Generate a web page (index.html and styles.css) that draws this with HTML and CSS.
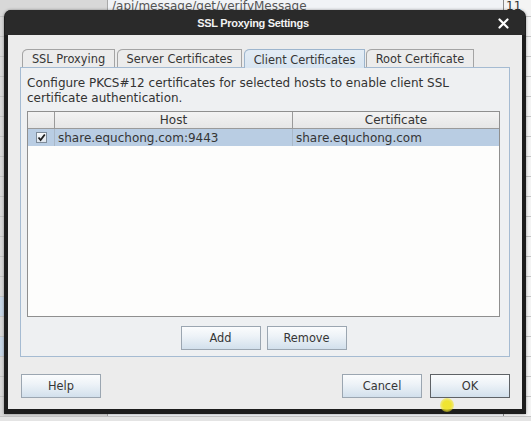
FILE: index.html
```html
<!DOCTYPE html>
<html>
<head>
<meta charset="utf-8">
<link rel="stylesheet" href="styles.css">
</head>
<body>
<div class="app">
  <div class="arow"><div class="c1"></div><div class="c2">/api/message/get/verifyMessage</div><div class="c3">11</div></div>
  <div class="arow"><div class="c1"></div><div class="c2"></div><div class="c3">11</div></div>
  <div class="arow"><div class="c1"></div><div class="c2"></div><div class="c3">11</div></div>
  <div class="arow"><div class="c1"></div><div class="c2"></div><div class="c3">11</div></div>
  <div class="arow"><div class="c1"></div><div class="c2"></div><div class="c3">11</div></div>
  <div class="arow"><div class="c1"></div><div class="c2"></div><div class="c3">11</div></div>
  <div class="arow"><div class="c1"></div><div class="c2"></div><div class="c3">11</div></div>
  <div class="arow"><div class="c1"></div><div class="c2"></div><div class="c3">11</div></div>
  <div class="arow"><div class="c1"></div><div class="c2"></div><div class="c3">11</div></div>
  <div class="arow"><div class="c1"></div><div class="c2"></div><div class="c3">11</div></div>
  <div class="arow"><div class="c1"></div><div class="c2"></div><div class="c3">11</div></div>
  <div class="arow"><div class="c1"></div><div class="c2"></div><div class="c3">11</div></div>
  <div class="arow"><div class="c1"></div><div class="c2"></div><div class="c3">11</div></div>
  <div class="arow"><div class="c1"></div><div class="c2"></div><div class="c3">11</div></div>
  <div class="arow"><div class="c1"></div><div class="c2"></div><div class="c3">11</div></div>
  <div class="arow asel"><div class="c1"></div><div class="c2"></div><div class="c3">11</div></div>
  <div class="arow"><div class="c1"></div><div class="c2"></div><div class="c3">11</div></div>
  <div class="arow asel"><div class="c1">/</div><div class="c2"></div><div class="c3">11</div></div>
  <div class="arow"><div class="c1"></div><div class="c2"></div><div class="c3">11</div></div>
  <div class="arow"><div class="c1">Z</div><div class="c2"></div><div class="c3">11</div></div>
  <div class="arow"><div class="c1"></div><div class="c2"></div><div class="c3"></div></div>
</div>

<div class="dialog">
  <div class="titlebar">
    <span class="title">SSL Proxying Settings</span>
    <svg class="close" width="11" height="11" viewBox="0 0 11 11"><path d="M1.5 1.5 L9.5 9.5 M9.5 1.5 L1.5 9.5" stroke="#ffffff" stroke-width="2.2" stroke-linecap="round"/></svg>
  </div>
  <div class="body">
    <div class="tabs">
      <div class="tab t1">SSL Proxying</div>
      <div class="tab t2">Server Certificates</div>
      <div class="tab t3 selected">Client Certificates</div>
      <div class="tab t4">Root Certificate</div>
    </div>
    <div class="panel">
      <p class="desc">Configure PKCS#12 certificates for selected hosts to enable client SSL<br>certificate authentication.</p>
      <div class="table">
        <div class="thead">
          <div class="cell chk"></div>
          <div class="cell host center">Host</div>
          <div class="cell cert center">Certificate</div>
        </div>
        <div class="trow sel">
          <div class="cell chk"><span class="checkbox"><svg width="9" height="9" viewBox="0 0 9 9"><path d="M1.5 4.5 L3.6 7 L7.8 1.5" fill="none" stroke="#1e1e1e" stroke-width="1.8"/></svg></span></div>
          <div class="cell host">share.equchong.com:9443</div>
          <div class="cell cert">share.equchong.com</div>
        </div>
      </div>
      <div class="panel-buttons">
        <button class="btn">Add</button>
        <button class="btn">Remove</button>
      </div>
    </div>
    <div class="footer">
      <button class="btn">Help</button>
      <div class="spacer"></div>
      <button class="btn">Cancel</button>
      <button class="btn default">OK</button>
    </div>
  </div>
</div>
<div class="cursor"></div>
</body>
</html>
```
FILE: styles.css
```css
html, body {
  margin: 0;
  padding: 0;
}
body {
  width: 531px;
  height: 421px;
  overflow: hidden;
  position: relative;
  background: #e4e4e4;
  font-family: "DejaVu Sans", sans-serif;
}

/* background application */
.app {
  display: flex;
  flex-direction: column;
  margin-top: -3px;
}
.arow {
  display: flex;
  height: 20px;
  box-sizing: border-box;
  border-bottom: 1px solid #c4c4c4;
  font-size: 12px;
  color: #555;
  line-height: 19px;
}
.c1 {
  width: 107px;
  background: #d8d8d8;
  border-right: 1px solid #a8a8a8;
  text-align: right;
}
.c2 {
  flex: 1;
  background: #f1f3f6;
  padding-left: 4px;
}
.c3 {
  width: 25px;
  background: #f4f4f4;
  border-left: 1px solid #8a8a8a;
  padding-left: 2px;
  color: #333;
}
.asel .c1, .asel .c2 {
  background: #c7d6e6;
}

/* dialog window */
.dialog {
  position: absolute;
  left: 4px;
  top: 10px;
  width: 522px;
  height: 404px;
  box-sizing: border-box;
  background: #1d1d1d;
  border-radius: 7px 7px 0 0;
  padding: 0 4px 5px 4px;
  display: flex;
  flex-direction: column;
  box-shadow: 0 0 3px rgba(0,0,0,0.4);
}
.titlebar {
  height: 25px;
  flex: none;
  display: flex;
  align-items: center;
  justify-content: center;
  position: relative;
  background: #2a2a2a;
  border-radius: 6px 6px 0 0;
  margin: 0 -3px;
}
.title {
  color: #f2f2f2;
  font-family: "Liberation Sans", sans-serif;
  font-weight: bold;
  font-size: 11px;
  letter-spacing: -0.3px;
  margin-right: 24px;
}
.close {
  position: absolute;
  right: 16px;
  top: 8px;
}
.body {
  flex: 1;
  background: #ececec;
  padding: 14px 12px 11px 12px;
  display: flex;
  flex-direction: column;
  color: #333;
  font-size: 11.4px;
}

/* tabs */
.tabs {
  height: 18px;
  display: flex;
  align-items: flex-end;
  padding-left: 2px;
  flex: none;
}
.tab {
  height: 18px;
  box-sizing: border-box;
  border: 1px solid #a4a4a4;
  border-bottom: none;
  border-top-left-radius: 6px 5px;
  background: #ececec;
  display: flex;
  align-items: center;
  justify-content: center;
  color: #363636;
  margin-right: 2px;
  padding-top: 1px;
}
.t1 { width: 93px; }
.t2 { width: 125px; }
.t3 { width: 121px; }
.t4 { width: 108px; }
.tab.selected {
  height: 19px;
  margin-bottom: -1px;
  background: linear-gradient(#e3ecf5, #d8e5f1);
  border-color: #9db5cd;
  position: relative;
  z-index: 1;
  margin-right: 1px;
}

.panel {
  height: 290px;
  flex: none;
  box-sizing: border-box;
  border: 1px solid #a5bbd2;
  background: #eef0f2;
  padding: 8px 9px 0 6px;
  display: flex;
  flex-direction: column;
}
.desc {
  margin: 0;
  line-height: 15px;
  font-size: 12px;
  color: #333;
}
.table {
  margin-top: 5px;
  height: 206px;
  box-sizing: border-box;
  border: 1px solid #8f8f8f;
  background: #fdfdfc;
  display: flex;
  flex-direction: column;
  font-size: 12px;
}
.thead {
  height: 17px;
  box-sizing: border-box;
  display: flex;
  background: linear-gradient(#f3f3f3, #e6e6e6);
  border-bottom: 1px solid #9a9a9a;
}
.trow {
  height: 17px;
  box-sizing: border-box;
  display: flex;
}
.trow.sel {
  background: #b9cde3;
}
.cell {
  box-sizing: border-box;
  display: flex;
  align-items: center;
  padding-left: 3px;
  white-space: nowrap;
  color: #353535;
}
.cell.center {
  justify-content: center;
  padding-left: 0;
}
.chk {
  width: 27px;
  border-right: 1px solid #9a9a9a;
  justify-content: center;
  padding-left: 0;
}
.host {
  width: 238px;
  border-right: 1px solid #9a9a9a;
}
.cert {
  flex: 1;
}
.trow .chk, .trow .host {
  border-right-color: #a9b8c8;
}
.checkbox {
  width: 11px;
  height: 11px;
  box-sizing: border-box;
  border: 1px solid #7d8b99;
  background: linear-gradient(#f7f9fb, #dfe6ee);
  display: flex;
  align-items: center;
  justify-content: center;
}

.panel-buttons {
  display: flex;
  justify-content: center;
  gap: 6px;
  margin-top: 9px;
}

.btn {
  width: 80px;
  height: 24px;
  box-sizing: border-box;
  border: 1px solid #9ba6b1;
  background: linear-gradient(#fbfcfd 0%, #eef3f8 40%, #d2e0ec 100%);
  font-family: "DejaVu Sans", sans-serif;
  font-size: 11.4px;
  color: #363636;
  padding: 0;
  border-radius: 0;
}
.btn.default {
  border-color: #5e6266;
}

.footer {
  margin-top: 17px;
  display: flex;
  gap: 8px;
  padding-left: 1px;
}
.spacer {
  flex: 1;
}

.cursor {
  position: absolute;
  left: 440px;
  top: 398px;
  width: 14px;
  height: 14px;
  border-radius: 50%;
  background: radial-gradient(rgba(240,228,40,0.95) 40%, rgba(240,228,40,0.5) 70%, rgba(240,228,40,0) 100%);
}
```
